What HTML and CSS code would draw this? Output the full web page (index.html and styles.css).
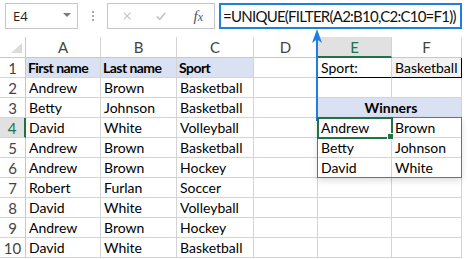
FILE: index.html
```html
<!DOCTYPE html>
<html lang="en">
<head>
  <meta charset="UTF-8">
  <title>UNIQUE FILTER</title>
  <link rel="stylesheet" href="styles.css">
</head>
<body>
  <div class="app">
    <div class="toolbar">
      <div class="namebox"><span>E4</span><span class="caret"></span></div>
      <div class="grip"><i></i><i></i><i></i></div>
      <div class="fbuttons">
        <svg width="10" height="10" viewBox="0 0 10 10"><path d="M1 1L9 9M9 1L1 9" stroke="#c4c4c4" stroke-width="1.4"/></svg>
        <svg width="12" height="10" viewBox="0 0 12 10"><path d="M1 5.5L4.5 9L11 1.5" fill="none" stroke="#c4c4c4" stroke-width="2"/></svg>
        <span class="fx"><i>f</i><i>x</i></span>
      </div>
      <div class="formula">=UNIQUE(FILTER(A2:B10,C2:C10=F1))</div>
    </div>

    <div class="sheet">
      <div class="corner"><span></span></div>
      <div class="colhead">A</div>
      <div class="colhead">B</div>
      <div class="colhead">C</div>
      <div class="colhead">D</div>
      <div class="colhead active">E</div>
      <div class="colhead">F</div>

      <div class="rowhead">1</div>
      <div class="c head">First name</div>
      <div class="c head">Last name</div>
      <div class="c head">Sport</div>
      <div class="c"></div>
      <div class="c crit">Sport:</div>
      <div class="c crit value">Basketball</div>

      <div class="rowhead">2</div>
      <div class="c">Andrew</div><div class="c">Brown</div><div class="c">Basketball</div>
      <div class="c"></div><div class="c"></div><div class="c"></div>

      <div class="rowhead">3</div>
      <div class="c">Betty</div><div class="c">Johnson</div><div class="c">Basketball</div>
      <div class="c"></div>
      <div class="c winners">Winners</div>

      <div class="rowhead active">4</div>
      <div class="c">David</div><div class="c">White</div><div class="c">Volleyball</div>
      <div class="c"></div>
      <div class="c selected">Andrew<span class="handle"></span></div><div class="c">Brown</div>

      <div class="rowhead">5</div>
      <div class="c">Andrew</div><div class="c">Brown</div><div class="c">Basketball</div>
      <div class="c"></div><div class="c">Betty</div><div class="c">Johnson</div>

      <div class="rowhead">6</div>
      <div class="c">Andrew</div><div class="c">Brown</div><div class="c">Hockey</div>
      <div class="c"></div><div class="c">David</div><div class="c">White</div>

      <div class="rowhead">7</div>
      <div class="c">Robert</div><div class="c">Furlan</div><div class="c">Soccer</div>
      <div class="c"></div><div class="c"></div><div class="c"></div>

      <div class="rowhead">8</div>
      <div class="c">David</div><div class="c">White</div><div class="c">Volleyball</div>
      <div class="c"></div><div class="c"></div><div class="c"></div>

      <div class="rowhead">9</div>
      <div class="c">Andrew</div><div class="c">Brown</div><div class="c">Hockey</div>
      <div class="c"></div><div class="c"></div><div class="c"></div>

      <div class="rowhead">10</div>
      <div class="c">David</div><div class="c">White</div><div class="c">Basketball</div>
      <div class="c"></div><div class="c"></div><div class="c"></div>

      <!-- spill range outline, sits over E4:F6 -->
      <div class="spill"></div>
    </div>

    <svg class="arrow" width="12" height="92" viewBox="0 0 12 92">
      <path d="M6 0L11 14L7 11V92H5V11L1 14Z" fill="#1e7fe0"/>
    </svg>
  </div>
</body>
</html>
```

FILE: styles.css
```css
body {
  margin: 0;
  background: #fff;
  font-family: Lato, "Liberation Sans", sans-serif;
  color: #000;
}
.app {
  position: relative;
  width: 468px;
  height: 259px;
  overflow: hidden;
}
.toolbar {
  display: flex;
  align-items: stretch;
  height: 26px;
  padding: 3px 0 0 5px;
  margin-bottom: 8px;
}
.namebox {
  width: 73px;
  box-sizing: border-box;
  border: 1px solid #c6c6c6;
  display: flex;
  align-items: center;
  justify-content: space-between;
  padding: 0 6px 0 7px;
  font-family: "Open Sans", sans-serif;
  font-size: 13px;
  color: #222;
}
.caret {
  width: 0;
  height: 0;
  border-left: 4px solid transparent;
  border-right: 4px solid transparent;
  border-top: 4px solid #7a7a7a;
  margin-top: -3px;
}
.grip {
  display: flex;
  flex-direction: column;
  justify-content: center;
  gap: 2px;
  margin: 0 13px 0 14px;
}
.grip i {
  display: block;
  width: 2px;
  height: 2px;
  background: #a8a8a8;
}
.fbuttons {
  width: 108px;
  box-sizing: border-box;
  border: 1px solid #c6c6c6;
  display: flex;
  align-items: center;
  padding: 0 11px 0 15px;
  gap: 25px;
}
.fx {
  font-family: "Liberation Serif", serif;
  font-size: 15px;
  color: #555;
  margin-left: 2px;
}
.fx i + i {
  font-size: 12px;
}
.formula {
  width: 243px;
  margin-left: 4px;
  box-sizing: border-box;
  border: 2px solid #1e7fe0;
  font-size: 15px;
  letter-spacing: -0.75px;
  line-height: 22px;
  padding-left: 2px;
  white-space: nowrap;
  color: #111;
}

.sheet {
  position: relative;
  display: grid;
  grid-template-columns: 26px 75px 76px 77px 64px 74px 70px;
  grid-template-rows: 21px repeat(10, 20px);
  font-size: 14px;
}
.corner {
  border-right: 1px solid #c8c8c8;
  border-bottom: 1px solid #c8c8c8;
  position: relative;
}
.corner span {
  position: absolute;
  right: 3px;
  bottom: 4px;
  width: 0;
  height: 0;
  border-left: 11px solid transparent;
  border-bottom: 10px solid #dcdcdc;
}
.colhead {
  border-right: 1px solid #d4d4d4;
  border-bottom: 1px solid #c8c8c8;
  text-align: center;
  line-height: 20px;
  font-size: 15px;
  color: #444;
}
.colhead.active {
  background: #e1e1e1;
  color: #217346;
  border-bottom: 2px solid #217346;
}
.rowhead {
  border-right: 1px solid #c8c8c8;
  border-bottom: 1px solid #d4d4d4;
  text-align: center;
  line-height: 20px;
  font-size: 15px;
  color: #444;
}
.rowhead.active {
  background: #e1e1e1;
  color: #217346;
  border-right: 2px solid #217346;
}
.c {
  position: relative;
  border-right: 1px solid #d4d4d4;
  border-bottom: 1px solid #d4d4d4;
  padding-left: 3px;
  line-height: 20px;
  white-space: nowrap;
}
.head {
  background: #d9e1f2;
  font-weight: bold;
  letter-spacing: -0.55px;
  padding-left: 2px;
}
.crit {
  border-bottom-color: #000;
}
.value {
  background: #f2f2f2;
  border-right-color: #000;
}
.winners {
  grid-column: 6 / 8;
  background: #d9e1f2;
  font-weight: bold;
  text-align: center;
}
.selected {
  outline: 2px solid #217346;
  outline-offset: -1px;
  z-index: 2;
}
.handle {
  position: absolute;
  right: -3px;
  bottom: -3px;
  width: 5px;
  height: 5px;
  background: #217346;
  border: 1px solid #fff;
}
.spill {
  position: absolute;
  grid-row: 5 / 8;
  grid-column: 6 / 8;
  top: -1px;
  left: -1px;
  right: 0;
  bottom: 0;
  border: 1px solid #3a78d8;
  box-shadow: 0 3px 6px rgba(0, 0, 0, 0.12);
  z-index: 1;
  pointer-events: none;
}
.arrow {
  position: absolute;
  left: 311px;
  top: 29px;
}
```
